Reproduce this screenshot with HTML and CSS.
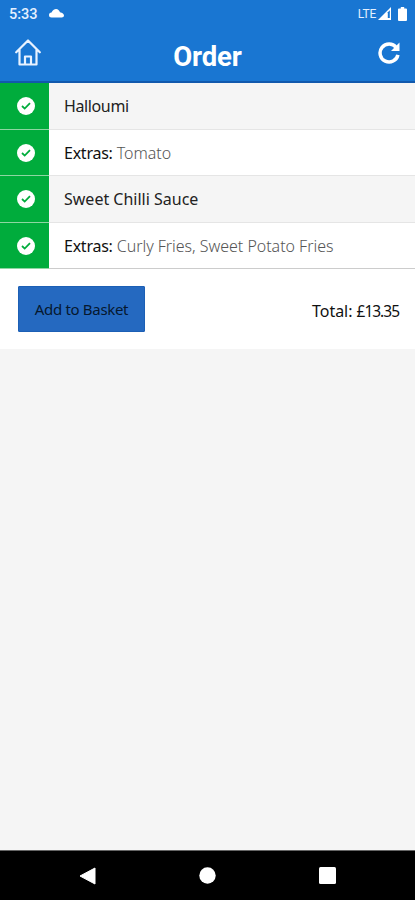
FILE: index.html
```html
<!DOCTYPE html>
<html lang="en">
<head>
<meta charset="utf-8">
<title>Order</title>
<link rel="stylesheet" href="styles.css">
</head>
<body>
<svg width="0" height="0" class="defs"><symbol id="tick" viewBox="0 0 18 18"><circle cx="9" cy="9" r="9" fill="#fff"/><path d="M5 9 7.700 11.600 13 6.200" fill="none" stroke="#00ac3c" stroke-width="1.800"/></symbol></svg>
<div class="status">
  <span class="time">5:33</span>
  <svg class="cloud" width="15" height="9" viewBox="0 0 15 9"><path d="M2.500 8.500a2.500 2.500 0 0 1 0-5C4 .8 5.500 0 7 0c2 0 3.300 1.300 4 3.200C13.500 3.400 15 5 15 6.500c0 1.200-1 2-2.200 2z" fill="#fff"/></svg>
  <span class="lte">LTE</span>
  <svg class="signal" width="13" height="13" viewBox="0 0 13 13"><path d="M0 13 13 0V13z" fill="#fff"/><path d="M9.800 5.300 11.800 3.300V11H9.800z" fill="#1976d2"/></svg>
  <svg class="battery" width="9" height="14" viewBox="0 0 9 14"><path d="M2.800 0h3.400v1.500H8a1 1 0 0 1 1 1V13a1 1 0 0 1-1 1H1a1 1 0 0 1-1-1V2.500a1 1 0 0 1 1-1h1.800z" fill="#fff"/></svg>
</div>
<header class="bar">
  <svg class="home" width="26" height="27" viewBox="0 0 26 27"><path d="M1.200 13.300 13 1.500 24.800 13.300M4.500 10.500V25.500H21.500V10.500M10 25V17.500H16V25" fill="none" stroke="#e8f2ff" stroke-width="2.200" stroke-linejoin="round" stroke-linecap="round"/></svg>
  <h1>Order</h1>
  <svg class="refresh" width="22" height="22" viewBox="0 0 22 22"><path d="M18.200 5.500A9 9 0 1 0 19.900 12.800" fill="none" stroke="#fff" stroke-width="3.500"/><path d="M21.500.5V9H13z" fill="#fff"/></svg>
</header>
<main>
  <ul class="items">
    <li class="shade"><span class="mark"><svg width="18" height="18"><use href="#tick"/></svg></span><p class="name">Halloumi</p></li>
    <li><span class="mark"><svg width="18" height="18"><use href="#tick"/></svg></span><p><b>Extras:</b> Tomato</p></li>
    <li class="shade"><span class="mark"><svg width="18" height="18"><use href="#tick"/></svg></span><p>Sweet Chilli Sauce</p></li>
    <li><span class="mark"><svg width="18" height="18"><use href="#tick"/></svg></span><p><b>Extras:</b> Curly Fries, Sweet Potato Fries</p></li>
  </ul>
  <section class="summary">
    <button type="button">Add to Basket</button>
    <span class="total">Total: <span class="price">£13.35</span></span>
  </section>
</main>
<nav>
  <svg width="17" height="18" viewBox="0 0 17 18"><path d="M16 1V17L1 9z" fill="#fff" stroke="#fff" stroke-linejoin="round"/></svg>
  <svg width="17" height="17" viewBox="0 0 17 17"><circle cx="8.500" cy="8.500" r="8.200" fill="#fff"/></svg>
  <svg width="17" height="17" viewBox="0 0 17 17"><rect width="17" height="17" rx="1.500" fill="#fff"/></svg>
</nav>
</body>
</html>
```
FILE: styles.css
```css
* { box-sizing: border-box; }
body { margin: 0; height: 900px; display: flex; flex-direction: column; background: #f5f5f5; font-family: "Noto Sans", sans-serif; overflow: hidden; }
svg { display: block; flex: none; }
.defs { position: absolute; }
.status { height: 26px; flex: none; display: flex; align-items: center; padding: 1px 8px 0 9px; background: #1976d2; color: #e4f0ff; font-family: Roboto, sans-serif; }
.time { width: 40px; padding-top: 1px; font-size: 14.500px; font-weight: 500; }
.lte { margin-left: auto; font-size: 12px; letter-spacing: -.2px; }
.signal { margin-left: 2px; }
.battery { margin-left: 7px; }
.bar { height: 57px; flex: none; display: grid; grid-template-columns: 1fr auto 1fr; padding: 13px 15px 0; background: #1976d2; border-bottom: 2px solid #1259ad; }
.bar h1 { margin: 1px 0 0; font: bold 27.500px/34px Roboto, sans-serif; letter-spacing: -.1px; color: #fff; }
.refresh { justify-self: end; margin-top: 3px; }
main { background: #fff; }
.items { margin: 0; padding: 0; list-style: none; }
.items li { height: 46.500px; display: flex; border-bottom: 1px solid #e5e5e5; }
.items li:last-child { border-color: #ccc; }
.items .shade { background: #f5f5f5; }
.mark { width: 49px; margin-bottom: -1px; padding: 14px 0 0 17px; background: #00ac3c; border-bottom: 1px solid #8ed6a2; }
.items p { margin: 0 0 0 15px; font-size: 16px; font-weight: 300; line-height: 47px; letter-spacing: -.03px; color: #555; white-space: nowrap; }
.items .shade p { font-weight: 400; letter-spacing: 0; color: #222; }
.items .shade .name { letter-spacing: -.38px; }
.items b { font-weight: 400; letter-spacing: -.25px; color: #111; }
.summary { height: 80px; display: flex; justify-content: space-between; padding: 17px 16px 0 18px; }
button { width: 127px; height: 46px; padding: 0; border: 1px solid #1c5fb5; border-radius: 1px; background: #2569c0; color: #06182f; font: 15px "Noto Sans", sans-serif; letter-spacing: -.33px; }
.total { font-size: 16px; line-height: 50px; letter-spacing: -.05px; color: #111; }
.price { font-size: 15.500px; letter-spacing: -1px; }
nav { height: 50px; flex: none; margin-top: auto; display: flex; align-items: center; justify-content: center; gap: 103px; background: #000; border-top: 1px solid #666; }
```
